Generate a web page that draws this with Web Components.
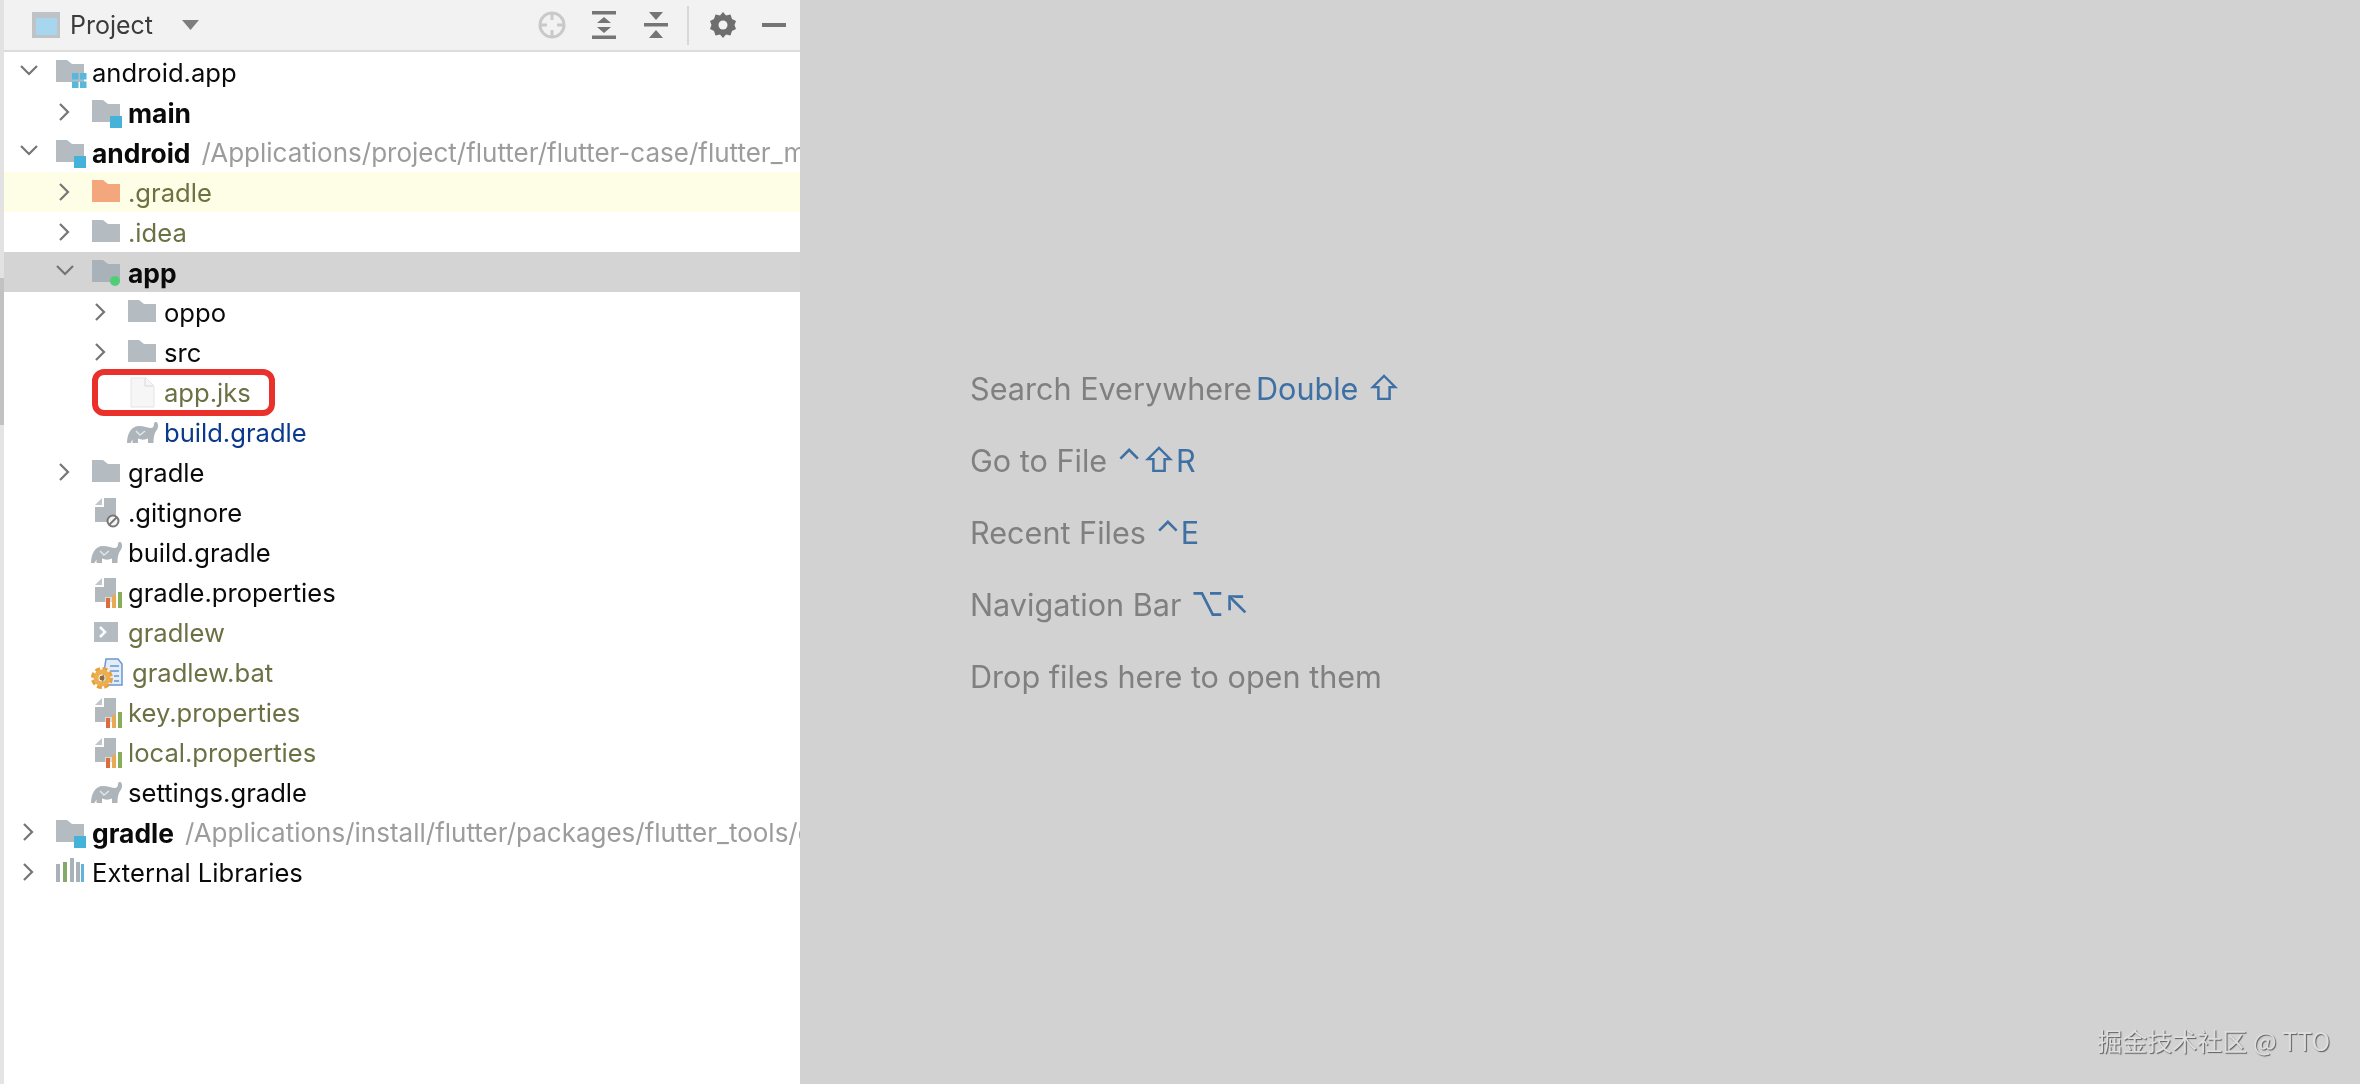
<!DOCTYPE html>
<html><head><meta charset="utf-8"><style>
html,body{margin:0;height:100%;overflow:hidden;font-family:Inter,"Noto Sans CJK SC",sans-serif}
</style></head><body>
<ide-window>
  <project-panel>
    <tree-row depth="0" open icon="module">android.app</tree-row>
    <tree-row depth="1" closed icon="src" bold>main</tree-row>
    <tree-row depth="0" open icon="src" bold path="/Applications/project/flutter/flutter-case/flutter_module/android">android</tree-row>
    <tree-row depth="1" closed icon="orange" tone="olive" bg="#fefee6">.gradle</tree-row>
    <tree-row depth="1" closed icon="folder" tone="olive">.idea</tree-row>
    <tree-row depth="1" open icon="dot" bold bg="#d4d4d4">app</tree-row>
    <tree-row depth="2" closed icon="folder">oppo</tree-row>
    <tree-row depth="2" closed icon="folder">src</tree-row>
    <tree-row depth="2" icon="file" tone="olive">app.jks</tree-row>
    <tree-row depth="2" icon="elephant" tone="blue">build.gradle</tree-row>
    <tree-row depth="1" closed icon="folder">gradle</tree-row>
    <tree-row depth="1" icon="ignore">.gitignore</tree-row>
    <tree-row depth="1" icon="elephant">build.gradle</tree-row>
    <tree-row depth="1" icon="props">gradle.properties</tree-row>
    <tree-row depth="1" icon="shell" tone="olive">gradlew</tree-row>
    <tree-row depth="1" icon="bat" tone="olive" shift>gradlew.bat</tree-row>
    <tree-row depth="1" icon="props" tone="olive">key.properties</tree-row>
    <tree-row depth="1" icon="props" tone="olive">local.properties</tree-row>
    <tree-row depth="1" icon="elephant">settings.gradle</tree-row>
    <tree-row depth="0" closed icon="src" bold path="/Applications/install/flutter/packages/flutter_tools/gradle">gradle</tree-row>
    <tree-row depth="0" closed icon="libs">External Libraries</tree-row>
  </project-panel>
  <welcome-hints>
    <hint-line keys="Double ⇧">Search Everywhere</hint-line>
    <hint-line keys="⌃⇧R">Go to File</hint-line>
    <hint-line keys="⌃E">Recent Files</hint-line>
    <hint-line keys="⌥↖">Navigation Bar</hint-line>
    <hint-line>Drop files here to open them</hint-line>
  </welcome-hints>
  <water-mark>掘金技术社区 @ TTO</water-mark>
</ide-window>
<script>
const FOLDER=c=>`<path d="M0 8h11l5 4h12v18H0z" fill="${c}"/>`;
const DOC=`<path d="M12 6h12v24H3V15h9z" fill="#b1b9be"/><path d="M3 13l7-7v7z" fill="#c0c6cb"/>`;
const ICONS={
 folder:FOLDER('#b4bcc2'),
 orange:FOLDER('#f4a67c'),
 src:FOLDER('#b4bcc2')+`<rect x="18" y="24" width="12" height="12" fill="#45b3d9"/>`,
 module:FOLDER('#b4bcc2')+`<path d="M16 21h6.500v6.500H16zM24 21h6.500v6.500H24zM16 29.500h6.500V36H16zM24 29.500h6.500V36H24z" fill="#55b8dc"/>`,
 dot:FOLDER('#a9b2b8')+`<circle cx="23" cy="29" r="5" fill="#4fce76"/>`,
 file:`<path d="M3 6h15l8 8v21H3z" fill="#f6f6f6" stroke="#e4e4e4"/><path d="M17 6v8h8" fill="none" stroke="#d8d8d8"/>`,
 elephant:`<path d="M-1 31C-1 22 3 14 11 14c5 0 9 2 12 2 2 0 3-2 3-4 0-2 2-2.500 3-1.500 2 2.500 1 6.500-1 8.500-2 3-2.500 7-2.500 12H20v-4.500c-3 1.500-7 1.500-10 0V31H4.500v-3.500L2.500 31z" fill="#adb5bb"/><path d="M8 19l4 4 5-4" fill="none" stroke="#e2e6e8" stroke-width="1.500"/>`,
 ignore:DOC+`<circle cx="21" cy="29" r="5.500" fill="#f4f5f5" stroke="#777" stroke-width="2"/><path d="M17.500 32.500l7-7" stroke="#777" stroke-width="2"/>`,
 props:DOC+`<rect x="13" y="25" width="18" height="11" fill="#fff" opacity=".5"/><rect x="14" y="26" width="4" height="10" fill="#df6b3b"/><rect x="20" y="23" width="4" height="13" fill="#e8ab55"/><rect x="26" y="20" width="4" height="16" fill="#86ad57"/>`,
 shell:`<rect x="2" y="10" width="24" height="20" fill="#b4bbc1"/><path d="M8 15l5 5-5 5" fill="none" stroke="#fff" stroke-width="2.500"/>`,
 bat:`<path d="M14 7h12l4 5v21H10z" fill="#e3edf8" stroke="#6b97cf" stroke-width="1.500"/><path d="M18 14h9M18 19h9M22 24h5M22 29h5" stroke="#6b97cf" stroke-width="1.500"/><circle cx="10" cy="26" r="9.500" fill="none" stroke="#e7a13c" stroke-width="3" stroke-dasharray="5 2.500"/><circle cx="10" cy="26" r="6" fill="none" stroke="#eeae4d" stroke-width="5"/><circle cx="10" cy="26" r="2.500" fill="#8c6a3a"/>`,
 libs:`<path d="M0 12h4v18H0z" fill="#a9b2b8"/><path d="M7 10h4v20H7z" fill="#82ab66"/><path d="M14 6h4v24h-4z" fill="#a9b2b8"/><path d="M20 10h4v20h-4z" fill="#a9b2b8"/><path d="M25 12h3v18h-3z" fill="#63b4da"/>`
};
const mk=(host,html)=>{host.attachShadow({mode:'open'}).innerHTML=html};

customElements.define('ide-window',class extends HTMLElement{constructor(){super();mk(this,`<style>
:host{display:flex;position:relative;width:2360px;height:1084px;background:#d2d2d2;overflow:hidden;filter:blur(.45px)}
</style><slot></slot>`)}});

customElements.define('tool-bar',class extends HTMLElement{constructor(){super();mk(this,`<style>
:host{display:flex;align-items:center;box-sizing:border-box;height:52px;flex:none;background:#f2f2f2;border-bottom:2px solid #dcdcdc;padding-left:28px;font-size:25px;color:#3c3c3c}
svg{display:block;flex:none}
.name{margin-left:4px;width:112px}
.right{margin-left:auto;display:flex;align-items:center;padding-right:14px}
</style>
<svg width="34" height="30" viewBox="0 0 34 30"><rect x="0" y="2" width="28" height="26" fill="#bfc3c6"/><rect x="4" y="8" width="21" height="17" fill="#a6d7ee"/></svg>
<span class="name">Project</span>
<svg width="17" height="10" viewBox="0 0 17 10"><path d="M0 0h17L8.500 10z" fill="#7e7e7e"/></svg>
<div class="right">
<svg width="28" height="28" viewBox="0 0 28 28" style="margin-right:26px"><circle cx="14" cy="14" r="12" fill="none" stroke="#c9c9c9" stroke-width="3"/><path d="M14 1v8M14 19v8M1 14h8M19 14h8" stroke="#c9c9c9" stroke-width="3"/></svg>
<svg width="24" height="28" viewBox="0 0 24 28" style="margin-right:28px"><path d="M0 0h24v3.500H0zM0 24.500h24V28H0zM12 6l7 6H5zM12 22l-7-6h14z" fill="#757575"/></svg>
<svg width="24" height="26" viewBox="0 0 24 26" style="margin-right:19px"><path d="M0 11h24v3.500H0zM5 0h14l-7 8zM12 18l7 8H5z" fill="#757575"/></svg>
<div style="width:2px;height:39px;background:#d8d8d8;margin-right:21px"></div>
<svg width="26" height="26" viewBox="0 0 26 26" style="margin-right:26px"><path d="M13 0l3 3.500 4.500-1 1.500 4.500 4 2-1.500 4 1.500 4-4 2-1.500 4.500-4.500-1L13 26l-3-3.500-4.500 1L4 19l-4-2 1.500-4L0 9l4-2 1.500-4.500 4.500 1z" fill="#6e6e6e"/><circle cx="13" cy="13" r="4.500" fill="#f2f2f2"/></svg>
<div style="width:24px;height:4px;background:#757575"></div>
</div>`)}});

customElements.define('project-panel',class extends HTMLElement{constructor(){super();mk(this,`<style>
:host{display:flex;flex-direction:column;box-sizing:border-box;flex:none;width:800px;height:100%;background:#fff;border-left:4px solid;border-image:linear-gradient(#e2e2e2 278px,#c2c2c2 278px,#c2c2c2 425px,#e4e4e4 425px) 1;overflow:hidden;color:#000}
</style><tool-bar></tool-bar><slot></slot><box-mark></box-mark>`)}});

customElements.define('box-mark',class extends HTMLElement{constructor(){super();mk(this,`<style>
:host{position:absolute;left:92px;top:369px;width:183px;height:47px;box-sizing:border-box;border:6px solid #e9302a;border-radius:12px}
</style>`)}});

customElements.define('tree-row',class extends HTMLElement{constructor(){super();
 const a=n=>this.getAttribute(n),d=+a('depth')||0,hasO=this.hasAttribute('open'),hasC=this.hasAttribute('closed');
 const tone={olive:'#6c7144',blue:'#0b3a8c'}[a('tone')]||'#0a0a0a';
 const chev=hasO?`<svg width="24" height="40" viewBox="0 0 24 40"><path d="M5 14l8 8 8-8" fill="none" stroke="#757575" stroke-width="2.200"/></svg>`:hasC?`<svg width="24" height="40" viewBox="0 0 24 40"><path d="M8 12l8 8-8 8" fill="none" stroke="#757575" stroke-width="2.200"/></svg>`:'';
 mk(this,`<style>
:host{display:flex;align-items:center;flex:none;box-sizing:border-box;height:40px;white-space:nowrap;font-size:25.6px;padding-left:${12+36*d}px;background:${a('bg')||'transparent'};color:${tone}}
.c{width:24px;height:40px;flex:none;margin-right:16px}
.i{width:36px;height:40px;flex:none;overflow:visible}
svg{display:block;overflow:visible}
b{font-weight:700;font-size:26.4px}
.p{color:#9c9c9c;margin-left:11px;font-size:26px;padding-top:1px}
.t{padding-top:1px;${this.hasAttribute('shift')?'margin-left:4px;':''}}
</style><span class="c">${chev}</span><svg class="i" viewBox="0 0 36 40">${ICONS[a('icon')]||''}</svg><span class="t">${this.hasAttribute('bold')?'<b><slot></slot></b>':'<slot></slot>'}</span>${a('path')?`<span class="p">${a('path')}</span>`:''}`)}});

customElements.define('welcome-hints',class extends HTMLElement{constructor(){super();mk(this,`<style>
:host{display:flex;flex-direction:column;justify-content:center;flex:1;box-sizing:border-box;padding:1px 0 20px 170px;font-size:30.6px;color:#808080}
</style><slot></slot>`)}});

customElements.define('hint-line',class extends HTMLElement{constructor(){super();const k=this.getAttribute('keys')||'';
 const keys=k.replace(/[⇧⌃⌥↖]/g,m=>`<span class="s">${m}</span>`);
 mk(this,`<style>
:host{display:block;height:72px;line-height:72px;white-space:nowrap}
.k{color:#3e70a4;margin-left:${k.startsWith('Double')?4:9}px}
.s{font-family:Inter,sans-serif;font-size:33px;line-height:0}
</style><slot></slot>${k?`<span class="k">${keys}</span>`:''}`)}});

customElements.define('water-mark',class extends HTMLElement{constructor(){super();mk(this,`<style>
:host{position:absolute;right:30px;bottom:27px;font:25px/34px "Noto Sans CJK SC",sans-serif;color:#dedede;text-shadow:1px 1px 1px #5e5e5e;white-space:nowrap}
</style><slot></slot>`)}});
</script>
</body></html>
